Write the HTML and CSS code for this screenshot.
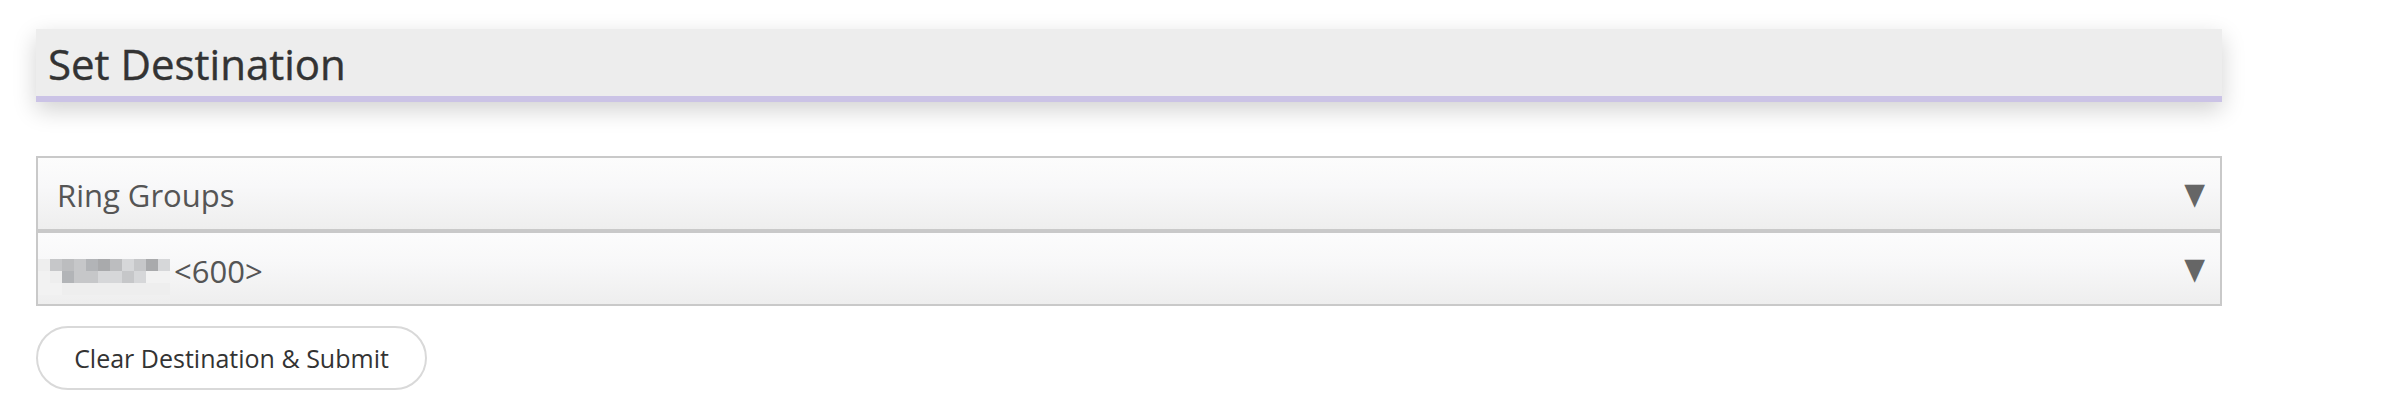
FILE: index.html
```html
<!DOCTYPE html>
<html lang="en">
<head>
<meta charset="utf-8">
<title>Set Destination</title>
<link rel="stylesheet" href="styles.css">
</head>
<body>
<div class="page">
  <div class="panel-head">
    <h2 class="panel-title">Set Destination</h2>
  </div>

  <div class="fields">
    <div class="select">
      <span class="select-value">Ring Groups</span>
      <span class="select-arrow">▼</span>
    </div>
    <div class="select">
      <span class="select-value">
        <span class="mosaic" aria-hidden="true">
          <i class="m0"></i><i class="m3"></i><i class="m4"></i><i class="m3"></i><i class="m5"></i><i class="m6"></i><i class="m4"></i><i class="m2"></i><i class="m3"></i><i class="m6"></i><i class="m2"></i>
          <i class="m1"></i><i class="m0"></i><i class="m5"></i><i class="m3"></i><i class="m3"></i><i class="m2"></i><i class="m2"></i><i class="m3"></i><i class="m2"></i><i class="m1"></i><i class="m1"></i>
          <i class="m1"></i><i class="m1"></i><i class="m0"></i><i class="m0"></i><i class="m0"></i><i class="m0"></i><i class="m0"></i><i class="m0"></i><i class="m0"></i><i class="m0"></i><i class="m0"></i>
        </span>&lt;600&gt;
      </span>
      <span class="select-arrow">▼</span>
    </div>
  </div>

  <button class="btn-pill" type="button">Clear Destination &amp; Submit</button>
</div>
</body>
</html>
```

FILE: styles.css
```css
html, body {
  margin: 0;
  padding: 0;
  background: #ffffff;
}

.page {
  width: 2186px;
  padding: 29px 36px;
  font-family: "Open Sans", "Noto Sans", sans-serif;
}

.panel-head {
  background: #ededed;
  border-bottom: 6px solid #cbc3e6;
  box-shadow: 0 8px 22px rgba(0, 0, 0, 0.18);
  height: 67px;
  display: flex;
  align-items: center;
  padding: 0 12px;
}

.panel-title {
  margin: 0;
  font-size: 42px;
  font-weight: 500;
  color: #333333;
  line-height: 1;
  padding-top: 2px;
  -webkit-text-stroke: 0.4px #333333;
}

.fields {
  margin-top: 54px;
  display: flex;
  flex-direction: column;
}

.select {
  height: 71px;
  border: 2px solid #c9c9c9;
  background: linear-gradient(to bottom, #fcfcfc 0%, #f8f8f9 40%, #eeeeee 100%);
  display: flex;
  align-items: center;
  justify-content: space-between;
  padding: 0 14px 0 19px;
}

.select-value {
  display: flex;
  align-items: center;
  font-size: 31px;
  color: #555555;
  line-height: 1;
  padding-top: 4px;
}

.select:nth-child(2) .select-value {
  margin-left: -19px;
  padding-top: 6px;
}

.select-arrow {
  font-size: 30px;
  color: #666666;
  line-height: 1;
  font-family: "DejaVu Sans", sans-serif;
  transform: scaleX(0.9);
}

.mosaic {
  display: grid;
  grid-template-columns: repeat(11, 12px);
  grid-auto-rows: 12px;
  margin-right: 4px;
  margin-top: 10px;
}

.mosaic i { display: block; }
.mosaic .m0 { background: #eeeeee; }
.mosaic .m1 { background: #f2f2f2; }
.mosaic .m2 { background: #d6d7d9; }
.mosaic .m3 { background: #c6c7c9; }
.mosaic .m4 { background: #bcbdbf; }
.mosaic .m5 { background: #b2b4b7; }
.mosaic .m6 { background: #a9aaac; }

.btn-pill {
  margin-top: 20px;
  height: 64px;
  width: 391px;
  border: 2px solid #d9d9d9;
  border-radius: 32px;
  background: #ffffff;
  font-family: "Open Sans", "Noto Sans", sans-serif;
  font-size: 25px;
  color: #333333;
  padding: 0;
  display: flex;
  align-items: center;
  justify-content: center;
}
```
